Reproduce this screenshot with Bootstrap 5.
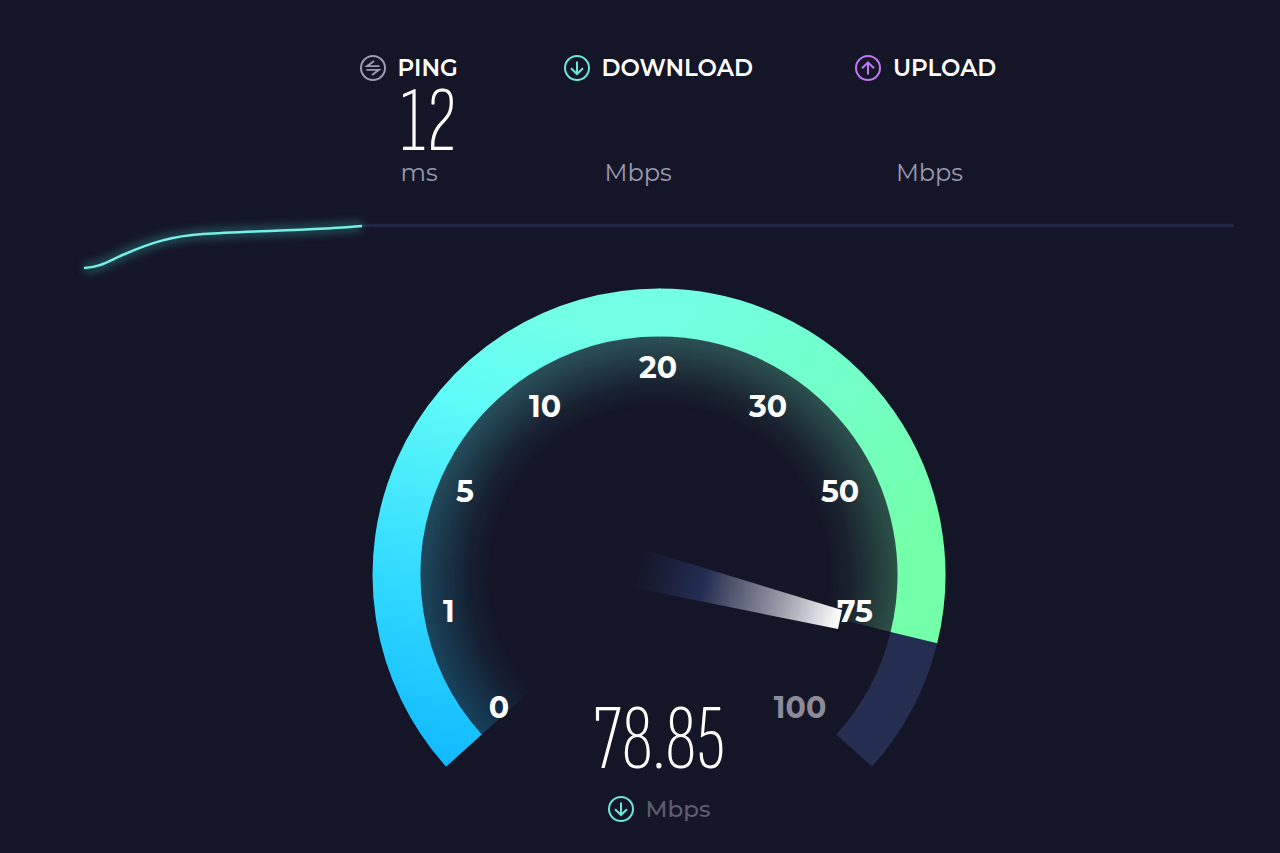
<!DOCTYPE html>
<html lang="en">
<head>
<meta charset="utf-8">
<meta name="viewport" content="width=device-width, initial-scale=1">
<title>Speed test</title>
<link href="https://cdn.jsdelivr.net/npm/bootstrap@5.3.0/dist/css/bootstrap.min.css" rel="stylesheet">
<style>
  body { background: #141526; color: #fff; font-family: Montserrat, "Open Sans", sans-serif; }
  .test-page { padding: 52px 46px 24px 84px; }
  .metrics { gap: 32px 102px; padding-left: 38px; }
  .metric { min-width: 102px; }
  .metric-title { font-size: 23px; font-weight: 600; line-height: 32px; gap: 12px; }
  .metric-body { padding-left: 41px; }
  .reading { font-family: "Sofia Sans Extra Condensed", "Roboto Condensed", Roboto, sans-serif; font-weight: 200; font-size: 92px; line-height: 72px; }
  .metric-body .reading { height: 70px; margin-top: 3px; }
  .unit { font-size: 24px; line-height: 32px; color: #9a9ab0; }
  .ring-icon { width: 26px; height: 26px; fill: none; stroke: currentColor; stroke-width: 2; flex: none; }
  .tone-ping { color: #9c9bb2; }
  .tone-down { color: #6ae8dc; }
  .tone-up { color: #c077f5; }
  .history { margin-top: 21px; overflow: visible; }
  .gauge { max-width: 574px; margin-top: 18px; }
  .gauge text { font-size: 30px; font-weight: 700; fill: #fff; text-anchor: middle; }
  .gauge .unreached { fill: #8c8c98; }
  .result { margin-top: -63px; }
  .result-unit { gap: 12px; }
  .result-unit .unit { font-size: 23px; font-weight: 500; color: #5c5d6e; }
</style>
</head>
<body>
<main class="test-page">
  <section class="metrics d-flex flex-wrap justify-content-center" aria-label="Results">
    <div class="metric">
      <h2 class="metric-title d-flex align-items-center mb-0">
        <svg class="ring-icon tone-ping" viewBox="0 0 26 26" aria-hidden="true"><circle cx="13" cy="13" r="12"/><path d="M19.500 11.200H7L14 6M6.500 14.800H19L12 20" stroke-width="1.800"/></svg>
        PING
      </h2>
      <div class="metric-body">
        <div class="reading">12</div>
        <div class="unit">ms</div>
      </div>
    </div>
    <div class="metric">
      <h2 class="metric-title d-flex align-items-center mb-0">
        <svg class="ring-icon tone-down" viewBox="0 0 26 26" aria-hidden="true"><circle cx="13" cy="13" r="12"/><path d="M13 6.500V19M7 13.200L13 19L19 13.200"/></svg>
        DOWNLOAD
      </h2>
      <div class="metric-body">
        <div class="reading"></div>
        <div class="unit">Mbps</div>
      </div>
    </div>
    <div class="metric">
      <h2 class="metric-title d-flex align-items-center mb-0">
        <svg class="ring-icon tone-up" viewBox="0 0 26 26" aria-hidden="true"><circle cx="13" cy="13" r="12"/><path d="M13 19.500V7.500M7 13.300L13 7.500L19 13.300"/></svg>
        UPLOAD
      </h2>
      <div class="metric-body">
        <div class="reading"></div>
        <div class="unit">Mbps</div>
      </div>
    </div>
  </section>

  <svg class="history d-block w-100" viewBox="0 0 1150 60" fill="none" role="img" aria-label="Download progress">
    <defs>
      <filter id="lineGlow" x="-10%" y="-60%" width="120%" height="220%"><feGaussianBlur stdDeviation="5"/></filter>
    </defs>
    <path d="M278 15.500H1150" stroke="#1b1f3c" stroke-width="5" opacity=".5"/>
    <path d="M278 15.500H1150" stroke="#232a50" stroke-width="2"/>
    <path d="M0 58C16 58 28 49 41 44C66 33 88 26 119 24C166 21 236 20 278 16" stroke="#3fc9c0" stroke-width="9" opacity=".35" filter="url(#lineGlow)"/>
    <path d="M0 58C16 58 28 49 41 44C66 33 88 26 119 24C166 21 236 20 278 16" stroke="#74f0e6" stroke-width="2.500"/>
  </svg>

  <svg class="gauge d-block w-100 mx-auto" viewBox="0 0 574 480" role="img" aria-label="Speed gauge">
    <defs>
      <linearGradient id="coolArc" gradientUnits="userSpaceOnUse" x1="60" y1="480" x2="190" y2="30">
        <stop offset="0" stop-color="#0fb9ff"/>
        <stop offset=".4" stop-color="#35dcff"/>
        <stop offset=".78" stop-color="#60fcf8"/>
        <stop offset="1" stop-color="#72ffe6"/>
      </linearGradient>
      <linearGradient id="warmArc" gradientUnits="userSpaceOnUse" x1="287" y1="20" x2="540" y2="250">
        <stop offset="0" stop-color="#72ffe6"/>
        <stop offset=".55" stop-color="#73ffc8"/>
        <stop offset="1" stop-color="#74ffaa"/>
      </linearGradient>
      <radialGradient id="fade" gradientUnits="userSpaceOnUse" cx="287" cy="287" r="239">
        <stop offset=".7" stop-color="#fff" stop-opacity="0"/>
        <stop offset=".8" stop-color="#fff" stop-opacity=".06"/>
        <stop offset=".9" stop-color="#fff" stop-opacity=".16"/>
        <stop offset="1" stop-color="#fff" stop-opacity=".26"/>
      </radialGradient>
      <mask id="innerFade" maskUnits="userSpaceOnUse" x="0" y="0" width="574" height="480"><circle cx="287" cy="287" r="239" fill="url(#fade)"/></mask>
      <linearGradient id="needle" gradientUnits="userSpaceOnUse" x1="264" y1="281" x2="467" y2="332">
        <stop offset="0" stop-color="#222c52" stop-opacity="0"/>
        <stop offset=".33" stop-color="#232c52"/>
        <stop offset=".45" stop-color="#4a4f69"/>
        <stop offset=".7" stop-color="#9696a4"/>
        <stop offset="1" stop-color="#fff"/>
      </linearGradient>
    </defs>
    <g fill="none" stroke-width="76" mask="url(#innerFade)">
      <path d="M137.600 421.500A201 201 0 0 1 287 86" stroke="url(#coolArc)"/>
      <path d="M287 86A201 201 0 0 1 482.200 334.900" stroke="url(#warmArc)"/>
    </g>
    <g fill="none" stroke-width="48">
      <path d="M541.900 349.600A262.500 262.500 0 0 1 482.100 462.600" stroke="#242e50"/>
      <path d="M91.900 462.600A262.500 262.500 0 0 1 288 24.500" stroke="url(#coolArc)"/>
      <path d="M287 24.500A262.500 262.500 0 0 1 541.900 349.600" stroke="url(#warmArc)"/>
    </g>
    <path d="M273 262L470 322L466 341L263 300Z" fill="url(#needle)"/>
    <text x="127" y="430">0</text>
    <text x="77" y="334">1</text>
    <text x="93" y="214">5</text>
    <text x="173" y="129">10</text>
    <text x="286" y="90">20</text>
    <text x="396" y="129">30</text>
    <text x="468" y="214">50</text>
    <text x="483" y="334">75</text>
    <text class="unreached" x="428" y="430">100</text>
  </svg>

  <div class="result position-relative text-center">
    <div class="reading">78.85</div>
    <div class="result-unit d-flex align-items-center justify-content-center mt-3">
      <svg class="ring-icon tone-down" viewBox="0 0 26 26" aria-hidden="true"><circle cx="13" cy="13" r="12"/><path d="M13 6.500V19M7 13.200L13 19L19 13.200"/></svg>
      <span class="unit">Mbps</span>
    </div>
  </div>
</main>
<script src="https://cdn.jsdelivr.net/npm/bootstrap@5.3.0/dist/js/bootstrap.bundle.min.js"></script>
</body>
</html>
